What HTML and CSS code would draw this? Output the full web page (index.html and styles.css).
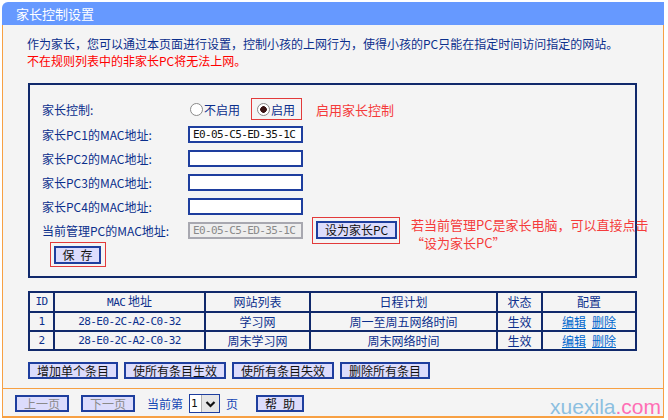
FILE: index.html
```html
<!DOCTYPE html>
<html lang="zh-CN">
<head>
  <meta charset="UTF-8">
  <title>家长控制设置</title>
  <link rel="stylesheet" href="styles.css">
</head>
<body>
  <div class="page">
    <div class="title">家长控制设置</div>
    <div class="panel">
      <p class="intro">作为家长，您可以通过本页面进行设置，控制小孩的上网行为，使得小孩的PC只能在指定时间访问指定的网站。<br><span class="warn">不在规则列表中的非家长PC将无法上网。</span></p>

      <!-- 设置表单 -->
      <div class="formBox">
        <div class="label">家长控制:</div>
        <div class="ctl">
          <span class="opt"><span class="radio"></span>不启用</span>
          <span class="mark markRadio"><span class="opt"><span class="radio on"></span>启用</span></span>
          <span class="hint hintShort">启用家长控制</span>
        </div>

        <div class="label">家长PC1的MAC地址:</div>
        <div class="ctl"><input class="mac" type="text" value="E0-05-C5-ED-35-1C"></div>

        <div class="label">家长PC2的MAC地址:</div>
        <div class="ctl"><input class="mac" type="text" value=""></div>

        <div class="label">家长PC3的MAC地址:</div>
        <div class="ctl"><input class="mac" type="text" value=""></div>

        <div class="label">家长PC4的MAC地址:</div>
        <div class="ctl"><input class="mac" type="text" value=""></div>

        <div class="label">当前管理PC的MAC地址:</div>
        <div class="ctl">
          <input class="mac" type="text" value="E0-05-C5-ED-35-1C" disabled>
          <span class="mark markSet"><button class="btn">设为家长PC</button></span>
          <span class="hint hintLong">若当前管理PC是家长电脑，可以直接点击<br>“设为家长PC”</span>
        </div>

        <div class="saveRow">
          <span class="mark markSave"><button class="btn btnSave">保&ensp;存</button></span>
        </div>
      </div>

      <!-- 规则列表 -->
      <table class="rules">
        <thead>
          <tr>
            <th class="cId mono">ID</th>
            <th class="cMac"><span class="mono">MAC</span> 地址</th>
            <th class="cSite">网站列表</th>
            <th class="cPlan">日程计划</th>
            <th class="cState">状态</th>
            <th class="cConf">配置</th>
          </tr>
        </thead>
        <tbody>
          <tr>
            <td class="mono">1</td>
            <td class="mono">28-E0-2C-A2-C0-32</td>
            <td>学习网</td>
            <td>周一至周五网络时间</td>
            <td>生效</td>
            <td><a href="#">编辑</a>&ensp;<a href="#">删除</a></td>
          </tr>
          <tr>
            <td class="mono">2</td>
            <td class="mono">28-E0-2C-A2-C0-32</td>
            <td>周末学习网</td>
            <td>周末网络时间</td>
            <td>生效</td>
            <td><a href="#">编辑</a>&ensp;<a href="#">删除</a></td>
          </tr>
        </tbody>
      </table>

      <div class="actions">
        <button class="btn">增加单个条目</button>
        <button class="btn">使所有条目生效</button>
        <button class="btn">使所有条目失效</button>
        <button class="btn">删除所有条目</button>
      </div>

      <div class="footer">
        <button class="btn off">上一页</button>
        <button class="btn off">下一页</button>
        <span class="pageText">当前第</span>
        <span class="pageSel">1<span class="arrow"><svg width="11" height="8" viewBox="0 0 11 8"><path d="M1.5 2 L5.5 6 L9.5 2" fill="none" stroke="#111" stroke-width="2.2"/></svg></span></span>
        <span class="pageText">页</span>
        <button class="btn btnHelp">帮&ensp;助</button>
        <div class="wm">xuexila<span>.com</span></div>
      </div>
    </div>
  </div>
</body>
</html>
```

FILE: styles.css
```css
html, body {
  margin: 0;
  background-color: #fff;
}

body {
  padding: 2px 0 0 2px;
  font-family: "Noto Sans CJK SC", sans-serif;
  font-size: 12px;
}

.page {
  width: 662px;
}

.title {
  height: 23px;
  line-height: 23px;
  padding-left: 14px;
  background-color: #6699ff;
  color: #fff;
  font-size: 13px;
  border-top-left-radius: 6px;
}

.panel {
  background-color: #f4f4f4;
  border-left: 1px solid #f7a043;
  border-right: 1px solid #f7a043;
  border-bottom: 2px solid #f7a043;
}

.intro {
  margin: 0;
  padding: 10px 0 0 24px;
  line-height: 17px;
  color: #0b2f8c;
}

.warn {
  color: #f00;
}

.mono {
  font-family: "DejaVu Sans Mono", monospace;
  font-size: 11px;
  letter-spacing: -0.6px;
}

/* form */
.formBox {
  box-sizing: border-box;
  width: 609px;
  margin: 14px 0 0 25px;
  padding: 11px 0 9px 12px;
  border: 2px solid #10296b;
  display: grid;
  grid-template-columns: 146px 1fr;
  grid-template-rows: 26px repeat(5, 24px) 25px;
}

.label {
  display: flex;
  align-items: center;
  color: #0b2f8c;
}

.ctl {
  display: flex;
  align-items: center;
}

.opt {
  display: flex;
  align-items: center;
  color: #0b2f8c;
  margin-left: 2px;
}

.radio {
  box-sizing: border-box;
  width: 13px;
  height: 13px;
  margin-right: 1px;
  border: 1px solid #8a8a8a;
  border-radius: 50%;
  background-color: #fff;
}

.radio.on {
  background: radial-gradient(circle, #3a1414 0 3px, #fff 3.6px);
}

.mark {
  box-sizing: border-box;
  border: 1px solid #e23a3a;
  display: flex;
  align-items: center;
}

.markRadio {
  width: 51px;
  height: 22px;
  margin-left: 11px;
  padding-left: 3px;
}

.markSet {
  width: 88px;
  height: 27px;
  margin-left: 9px;
  padding-left: 3px;
}

.markSave {
  width: 56px;
  height: 25px;
  margin-left: 8px;
  padding-left: 3px;
}

.hint {
  color: #f53b3b;
  font-size: 13px;
  white-space: nowrap;
}

.hintShort {
  margin-left: 14px;
}

.hintLong {
  align-self: flex-start;
  margin: -2px 0 0 11px;
  line-height: 18px;
}

.mac {
  box-sizing: border-box;
  width: 115px;
  height: 17px;
  margin: 0;
  padding: 0 0 0 3px;
  border: 2px solid #1e3e9e;
  background-color: #fff;
  color: #111;
  font-family: "DejaVu Sans Mono", monospace;
  font-size: 11px;
  letter-spacing: -0.6px;
}

.mac:disabled {
  border-color: #a8a8b0;
  background-color: #eeeeee;
  color: #8a8a8a;
}

.saveRow {
  grid-column: 1 / 3;
  display: flex;
  align-items: center;
}

.btn {
  box-sizing: border-box;
  height: 18px;
  margin: 0;
  padding: 0 7px;
  border: 2px solid #1e3e9e;
  background-color: #dcdcfc;
  color: #111;
  font-family: "Noto Sans CJK SC", sans-serif;
  font-size: 12px;
  line-height: 14px;
  white-space: nowrap;
}

.btnSave {
  width: 47px;
  padding: 0;
}

/* table */
.rules {
  width: 609px;
  margin: 13px 0 0 25px;
  border-collapse: collapse;
  table-layout: fixed;
  border: 2px solid #10296b;
  color: #0b2f8c;
}

.rules th,
.rules td {
  height: 17px;
  padding: 0;
  border: 2px solid #10296b;
  text-align: center;
  font-weight: normal;
  line-height: 16px;
}

.cId { width: 23px; }
.cMac { width: 149px; }
.cSite { width: 103px; }
.cPlan { width: 185px; }
.cState { width: 43px; }

.rules a {
  color: #0066cc;
}

.actions {
  display: flex;
  gap: 6px;
  margin: 11px 0 0 25px;
}

.actions .btn {
  height: 17px;
}

/* footer */
.footer {
  position: relative;
  display: flex;
  align-items: center;
  margin-top: 9px;
  padding: 5px 0 3px 12px;
  border-top: 1px solid #f7a043;
}

.footer .btn {
  height: 17px;
}

.btn.off {
  color: #8a8a8a;
  margin-right: 12px;
}

.pageText {
  color: #1446b4;
}

.pageSel {
  box-sizing: border-box;
  display: flex;
  align-items: center;
  width: 31px;
  height: 19px;
  margin: 0 6px;
  padding-left: 1px;
  border: 1px solid #1e3e9e;
  background-color: #fff;
  color: #111;
  font-family: "DejaVu Sans Mono", monospace;
  font-size: 11px;
}

.arrow {
  margin-left: auto;
  width: 17px;
  height: 17px;
  display: flex;
  align-items: center;
  justify-content: center;
  background-color: #e6e6e6;
  border-left: 1px solid #b0b0b0;
}

.btnHelp {
  margin-left: 18px;
}

.wm {
  position: absolute;
  right: 2px;
  bottom: -3px;
  font-family: "Liberation Sans", Arial, sans-serif;
  font-size: 21px;
  color: #8cbfe0;
}

.wm span {
  color: #ff6eb4;
}
```
